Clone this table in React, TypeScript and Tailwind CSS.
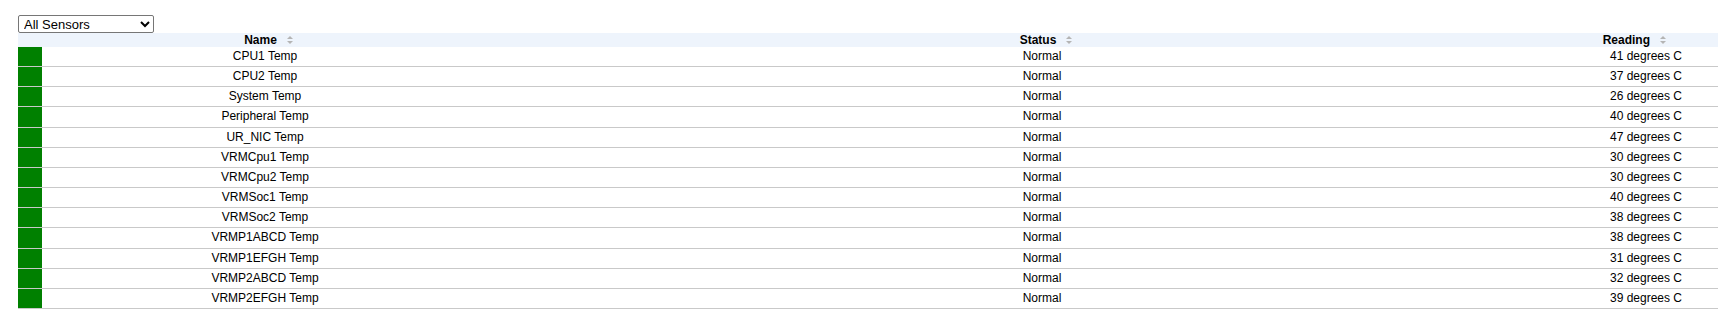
import React from "react";

const sensors = [
  { name: "CPU1 Temp", reading: "41 degrees C" },
  { name: "CPU2 Temp", reading: "37 degrees C" },
  { name: "System Temp", reading: "26 degrees C" },
  { name: "Peripheral Temp", reading: "40 degrees C" },
  { name: "UR_NIC Temp", reading: "47 degrees C" },
  { name: "VRMCpu1 Temp", reading: "30 degrees C" },
  { name: "VRMCpu2 Temp", reading: "30 degrees C" },
  { name: "VRMSoc1 Temp", reading: "40 degrees C" },
  { name: "VRMSoc2 Temp", reading: "38 degrees C" },
  { name: "VRMP1ABCD Temp", reading: "38 degrees C" },
  { name: "VRMP1EFGH Temp", reading: "31 degrees C" },
  { name: "VRMP2ABCD Temp", reading: "32 degrees C" },
  { name: "VRMP2EFGH Temp", reading: "39 degrees C" },
];

function SortIcon() {
  return (
    <svg width="6" height="8" viewBox="0 0 6 8" className="ml-[10px] shrink-0">
      <path d="M3 0 L6 3 L0 3 Z" fill="#b4b4b4" />
      <path d="M3 8 L6 5 L0 5 Z" fill="#b4b4b4" />
    </svg>
  );
}

export default function App() {
  return (
    <div className="w-[1718px] h-[312px] overflow-hidden bg-white pt-[15px] pl-[18px] text-black font-['Liberation_Sans',Arial,sans-serif]">
      <select
        defaultValue="all"
        className="block w-[136px] h-[18px] border border-[#767676] rounded-[2px] bg-white text-[13px] leading-[14px] pl-[1px] text-black font-['Liberation_Sans',Arial,sans-serif]"
      >
        <option value="all">All Sensors</option>
        <option value="temp">Temperature</option>
        <option value="fan">Fan</option>
        <option value="volt">Voltage</option>
      </select>

      <div className="w-[1700px]">
        <div className="grid grid-cols-[24px_446px_1108px_122px] h-[14px] bg-[#eef4fc] text-[12px] leading-[14px] font-bold">
          <div />
          <div className="flex items-center justify-center pl-[7px]">
            <span>Name</span>
            <SortIcon />
          </div>
          <div className="flex items-center justify-center pl-[8px]">
            <span>Status</span>
            <SortIcon />
          </div>
          <div className="flex items-center justify-end pr-[52px]">
            <span>Reading</span>
            <SortIcon />
          </div>
        </div>

        {sensors.map((s) => (
          <div
            key={s.name}
            className="grid grid-cols-[24px_446px_1108px_122px] h-[20.17px] border-b border-[#c9c9c9] text-[12px] leading-[19px]"
          >
            <div className="bg-[#008000]" />
            <div className="text-center">{s.name}</div>
            <div className="text-center">Normal</div>
            <div className="text-right pr-[36px] whitespace-nowrap">{s.reading}</div>
          </div>
        ))}
      </div>
    </div>
  );
}
